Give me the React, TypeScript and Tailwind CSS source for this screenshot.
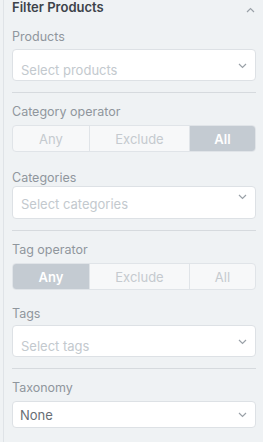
import { useState } from "react";

function Chevron({ className = "" }: { className?: string }) {
  return (
    <svg width="9" height="6" viewBox="0 0 9 6" className={className} fill="none">
      <path d="M1 1l3.5 3.5L8 1" stroke="#9aa1a8" strokeWidth="1.2" />
    </svg>
  );
}

function Label({ children, className = "" }: { children: string; className?: string }) {
  return (
    <div className={`h-[16px] text-[12.5px] leading-[16px] text-[#8f969d] ${className}`}>{children}</div>
  );
}

function Segmented({ value, onChange }: { value: string; onChange: (v: string) => void }) {
  const opts = [
    { k: "Any", w: "w-[76px]" },
    { k: "Exclude", w: "w-[100px]" },
    { k: "All", w: "flex-1" },
  ];
  return (
    <div className="flex h-[27px] rounded-[4px] border border-[#e0e4e8] bg-[#f7f8f9] overflow-hidden">
      {opts.map((o, i) => (
        <button
          key={o.k}
          onClick={() => onChange(o.k)}
          className={`${o.w} h-full text-[13px] leading-[16px] ${i > 0 ? "border-l border-[#e0e4e8]" : ""} ${
            value === o.k ? "bg-[#c4cbd2] text-white font-semibold" : "text-[#c5cacf]"
          }`}
        >
          {o.k}
        </button>
      ))}
    </div>
  );
}

function Divider() {
  return <div className="mt-[11px] h-px bg-[#d6dade]" />;
}

export default function App() {
  const [catOp, setCatOp] = useState("All");
  const [tagOp, setTagOp] = useState("Any");

  return (
    <div
      className="w-[263px] h-[442px] bg-[#eff2f4] overflow-hidden"
      style={{ fontFamily: "Inter, 'Noto Sans', sans-serif" }}
    >
      <div className="ml-[3px] h-full border-l border-[#dfe3e7] pl-[8px] pr-[7px]">
        <div className="flex items-start justify-between h-[24px]">
          <div className="text-[13px] leading-[16px] font-semibold text-[#3d434a] -mt-[1px]">Filter Products</div>
          <Chevron className="rotate-180 mt-[7px] mr-[1px]" />
        </div>

        <Label className="mt-[5px]">Products</Label>
        <div className="mt-[4px] h-[32px] rounded-[4px] border border-[#dde1e5] bg-white relative flex items-end px-[8px] pb-[1px]">
          <span className="text-[13px] leading-[18px] text-[#c3c9ce]">Select products</span>
          <Chevron className="absolute right-[8px] top-[13px]" />
        </div>

        <Divider />

        <Label className="mt-[11px]">Category operator</Label>
        <div className="mt-[5px]">
          <Segmented value={catOp} onChange={setCatOp} />
        </div>

        <Label className="mt-[18px]">Categories</Label>
        <div className="h-[33px] rounded-[4px] border border-[#dde1e5] bg-white relative flex items-center px-[8px]">
          <span className="text-[13px] leading-[18px] text-[#c3c9ce] mt-[2px]">Select categories</span>
          <Chevron className="absolute right-[8px] top-[7px]" />
        </div>

        <Divider />

        <Label className="mt-[11px]">Tag operator</Label>
        <div className="mt-[5px]">
          <Segmented value={tagOp} onChange={setTagOp} />
        </div>

        <Label className="mt-[16px]">Tags</Label>
        <div className="mt-[3px] h-[32px] rounded-[4px] border border-[#dde1e5] bg-white relative flex items-end px-[8px] pb-[1px]">
          <span className="text-[13px] leading-[18px] text-[#c3c9ce]">Select tags</span>
          <Chevron className="absolute right-[8px] top-[13px]" />
        </div>

        <Divider />

        <Label className="mt-[11px]">Taxonomy</Label>
        <div className="mt-[5px] h-[27px] rounded-[4px] border border-[#dde1e5] bg-white relative flex items-center px-[7px]">
          <span className="text-[13px] leading-[16px] text-[#676e75]">None</span>
          <Chevron className="absolute right-[8px] top-[10px]" />
        </div>
      </div>
    </div>
  );
}
